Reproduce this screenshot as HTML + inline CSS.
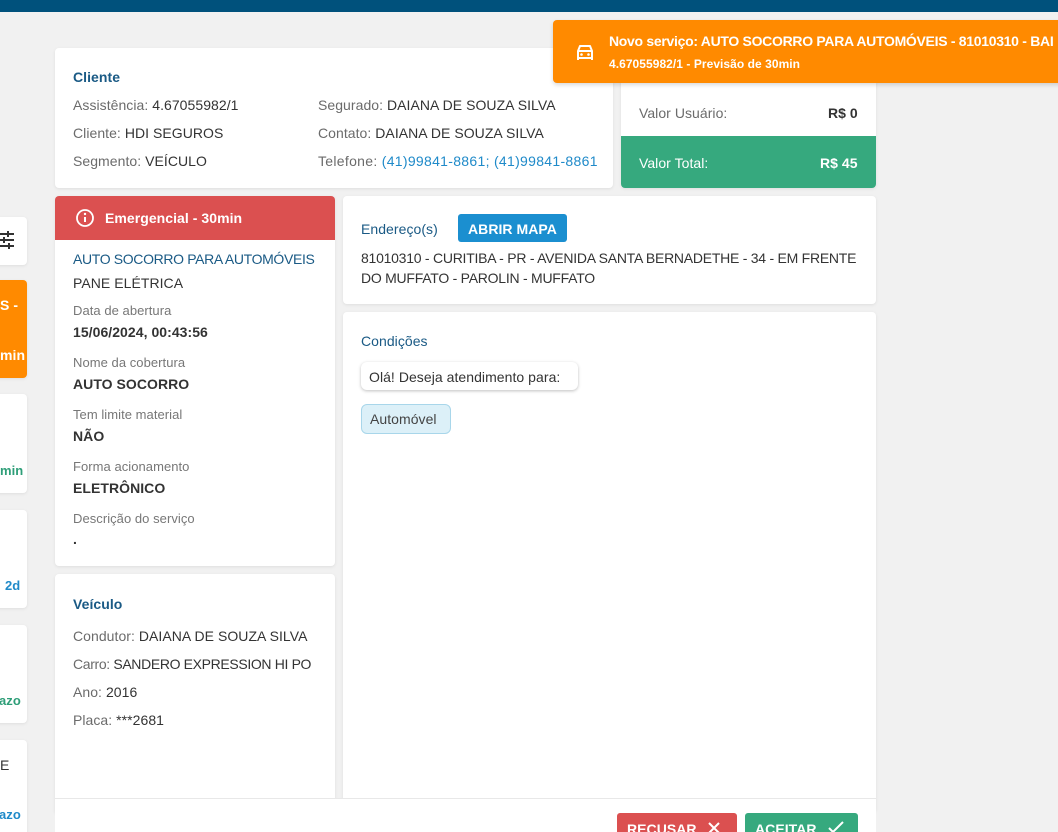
<!DOCTYPE html>
<html><head><meta charset="utf-8"><style>
*{box-sizing:border-box;margin:0;padding:0}
html,body{width:1058px;height:832px;overflow:hidden}
body{background:#f1f1f1;font-family:"Liberation Sans",sans-serif;font-size:14px;color:#333;position:relative;letter-spacing:0.05px}
.a{position:absolute}
.card{position:absolute;background:#fff;border-radius:4px;box-shadow:0 1px 3px rgba(0,0,0,.08)}
.t{position:absolute;white-space:nowrap}
.g{color:#6b6b6b}
.h{color:#1a5a85;font-weight:bold;font-size:14px}
.lbl{color:#777;font-size:13px}
.b{font-weight:bold;color:#333}
.u{letter-spacing:-0.35px}
</style></head><body>
<div class="a" style="left:0;top:0;width:1058px;height:12px;background:#00517c"></div>

<div class="card" style="left:-10px;top:217px;width:37px;height:48px"></div>
<svg class="a" style="left:0;top:230px" width="14" height="20" viewBox="0 0 14 20"><path d="M0 4h14M0 10h14M0 16h14M8 1v6M4 7v6M9 13v6" stroke="#333" stroke-width="2" fill="none"/></svg>
<div class="card" style="left:-10px;top:280px;width:37px;height:98px;background:#ff8a00"></div>
<div class="t" style="left:0;top:297px;color:#fff;font-weight:bold">S -</div>
<div class="t" style="left:0;top:347px;color:#fff;font-weight:bold">min</div>
<div class="card" style="left:-10px;top:394px;width:37px;height:99px"></div>
<div class="t" style="left:0;top:463px;color:#2e9e78;font-weight:bold;font-size:13px">min</div>
<div class="card" style="left:-10px;top:510px;width:37px;height:98px"></div>
<div class="t" style="left:5px;top:578px;color:#1f8ac9;font-weight:bold;font-size:13px">2d</div>
<div class="card" style="left:-10px;top:625px;width:37px;height:98px"></div>
<div class="t" style="left:-1px;top:693px;color:#2e9e78;font-weight:bold;font-size:13px">azo</div>
<div class="card" style="left:-10px;top:740px;width:37px;height:100px"></div>
<div class="t" style="left:0;top:757px;color:#333">E</div>
<div class="t" style="left:-1px;top:807px;color:#1f8ac9;font-weight:bold;font-size:13px">azo</div>

<div class="card" style="left:55px;top:48px;width:558px;height:140px"></div>
<div class="t h" style="left:73px;top:69px">Cliente</div>
<div class="t" style="left:73px;top:97px"><span class="g">Assistência:</span> 4.67055982/1</div>
<div class="t" style="left:73px;top:125px"><span class="g">Cliente:</span> HDI SEGUROS</div>
<div class="t" style="left:73px;top:153px"><span class="g">Segmento:</span> VEÍCULO</div>
<div class="t" style="left:318px;top:97px"><span class="g">Segurado:</span> DAIANA DE SOUZA SILVA</div>
<div class="t" style="left:318px;top:125px"><span class="g">Contato:</span> DAIANA DE SOUZA SILVA</div>
<div class="t" style="left:318px;top:153px;letter-spacing:0.3px"><span class="g">Telefone:</span> <span style="color:#1f8ac9">(41)99841-8861; (41)99841-8861</span></div>

<div class="card" style="left:621px;top:48px;width:255px;height:140px;overflow:hidden">
<div class="a" style="left:0;top:88px;width:255px;height:52px;background:#36a97e"></div></div>
<div class="t g" style="left:639px;top:105px">Valor Usuário:</div>
<div class="t b" style="left:828px;top:105px">R$ 0</div>
<div class="t" style="left:639px;top:155px;color:#fff">Valor Total:</div>
<div class="t" style="left:820px;top:155px;color:#fff;font-weight:bold">R$ 45</div>

<div class="a" style="left:553px;top:20px;width:520px;height:63px;background:#ff8a00;border-radius:4px;box-shadow:0 2px 4px rgba(0,0,0,.15)"></div>
<svg class="a" style="left:575px;top:43px" width="20" height="18" viewBox="0 0 20 18"><path d="M3 8l2-5h10l2 5v7H3z M3 8h14 M3 15v2 M17 15v2" stroke="#fff" stroke-width="2" fill="none" stroke-linejoin="round"/><circle cx="6.5" cy="11.5" r="1.3" fill="#fff"/><circle cx="13.5" cy="11.5" r="1.3" fill="#fff"/></svg>
<div class="t" style="left:609px;top:33px;color:#fff;font-weight:bold;font-size:14px;letter-spacing:-0.3px">Novo serviço: AUTO SOCORRO PARA AUTOMÓVEIS - 81010310 - BAI</div>
<div class="t" style="left:609px;top:57px;color:#fff;font-weight:bold;font-size:12px">4.67055982/1 - Previsão de 30min</div>

<div class="card" style="left:55px;top:196px;width:280px;height:370px;overflow:hidden">
<div class="a" style="left:0;top:0;width:280px;height:44px;background:#db5050"></div></div>
<svg class="a" style="left:75px;top:208px" width="20" height="20" viewBox="0 0 20 20"><circle cx="10" cy="10" r="8" stroke="#fff" stroke-width="1.8" fill="none"/><path d="M10 9v5" stroke="#fff" stroke-width="2"/><circle cx="10" cy="6" r="1.2" fill="#fff"/></svg>
<div class="t" style="left:105px;top:210px;color:#fff;font-weight:bold;font-size:14px">Emergencial - 30min</div>
<div class="t u" style="left:73px;top:251px;color:#1a5a85">AUTO SOCORRO PARA AUTOMÓVEIS</div>
<div class="t" style="left:73px;top:275px">PANE ELÉTRICA</div>
<div class="t lbl" style="left:73px;top:303px">Data de abertura</div>
<div class="t b" style="left:73px;top:324px">15/06/2024, 00:43:56</div>
<div class="t lbl" style="left:73px;top:355px">Nome da cobertura</div>
<div class="t b" style="left:73px;top:376px">AUTO SOCORRO</div>
<div class="t lbl" style="left:73px;top:407px">Tem limite material</div>
<div class="t b" style="left:73px;top:428px">NÃO</div>
<div class="t lbl" style="left:73px;top:459px">Forma acionamento</div>
<div class="t b" style="left:73px;top:480px">ELETRÔNICO</div>
<div class="t lbl" style="left:73px;top:511px">Descrição do serviço</div>
<div class="t b" style="left:73px;top:531px">.</div>

<div class="card" style="left:55px;top:574px;width:280px;height:240px"></div>
<div class="t h" style="left:73px;top:596px">Veículo</div>
<div class="t" style="left:73px;top:628px"><span class="g">Condutor:</span> DAIANA DE SOUZA SILVA</div>
<div class="t u" style="left:73px;top:656px"><span class="g">Carro:</span> SANDERO EXPRESSION HI PO</div>
<div class="t" style="left:73px;top:684px"><span class="g">Ano:</span> 2016</div>
<div class="t" style="left:73px;top:712px"><span class="g">Placa:</span> ***2681</div>

<div class="card" style="left:343px;top:196px;width:533px;height:108px"></div>
<div class="t h" style="left:361px;top:221px;font-weight:normal">Endereço(s)</div>
<div class="a" style="left:458px;top:214px;width:109px;height:28px;background:#1b8fd0;border-radius:3px"></div>
<div class="t" style="left:468px;top:221px;color:#fff;font-weight:bold;font-size:14px">ABRIR MAPA</div>
<div class="t" style="left:361px;top:250px;letter-spacing:-0.25px">81010310 - CURITIBA - PR - AVENIDA SANTA BERNADETHE - 34 - EM FRENTE</div>
<div class="t" style="left:361px;top:270px;letter-spacing:-0.25px">DO MUFFATO - PAROLIN - MUFFATO</div>

<div class="card" style="left:343px;top:312px;width:533px;height:500px"></div>
<div class="t h" style="left:361px;top:333px;font-weight:normal">Condições</div>
<div class="a" style="left:361px;top:362px;width:217px;height:28px;background:#fff;border-radius:6px;box-shadow:0 1px 3px rgba(0,0,0,.25)"></div>
<div class="t" style="left:369px;top:369px">Olá! Deseja atendimento para:</div>
<div class="a" style="left:361px;top:404px;width:90px;height:30px;background:#dcf0f8;border:1px solid #a8d6ea;border-radius:6px"></div>
<div class="t" style="left:370px;top:411px;color:#444">Automóvel</div>

<div class="a" style="left:55px;top:798px;width:821px;height:40px;background:#fff;border-top:1px solid #e8e8e8"></div>
<div class="a" style="left:617px;top:813px;width:120px;height:30px;background:#db5050;border-radius:3px"></div>
<div class="t" style="left:627px;top:821px;color:#fff;font-weight:bold;font-size:14px">RECUSAR</div>
<svg class="a" style="left:707px;top:821px" width="14" height="14" viewBox="0 0 14 14"><path d="M2 2l10 10M12 2L2 12" stroke="#fff" stroke-width="2"/></svg>
<div class="a" style="left:745px;top:813px;width:113px;height:30px;background:#36a97e;border-radius:3px"></div>
<div class="t" style="left:755px;top:821px;color:#fff;font-weight:bold;font-size:14px">ACEITAR</div>
<svg class="a" style="left:827px;top:820px" width="18" height="14" viewBox="0 0 18 14"><path d="M2 8l4 4 10-10" stroke="#fff" stroke-width="2" fill="none"/></svg>
</body></html>
